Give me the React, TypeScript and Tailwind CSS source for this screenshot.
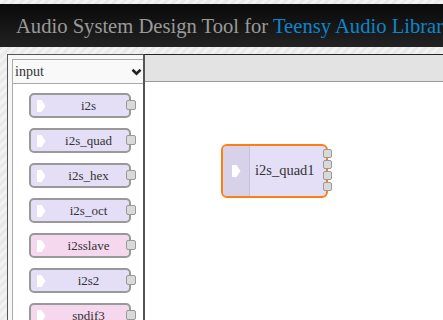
import React from "react";

const serif = "font-['Liberation_Serif','DejaVu_Serif',serif]";

type PaletteItem = { name: string; pink?: boolean };

const items: PaletteItem[] = [
  { name: "i2s" },
  { name: "i2s_quad" },
  { name: "i2s_hex" },
  { name: "i2s_oct" },
  { name: "i2sslave", pink: true },
  { name: "i2s2" },
  { name: "spdif3", pink: true },
];

function Arrow() {
  return (
    <svg width="9" height="14" viewBox="0 0 9 14">
      <polygon points="0,1 4.5,1 8.5,7 4.5,13 0,13" fill="#fff" />
    </svg>
  );
}

function Port({ size = "w-[10px] h-[10px]" }: { size?: string }) {
  return <div className={size + " rounded-[2px] border border-[#999] bg-[#d9d9d9]"} />;
}

function PaletteNode({ item }: { item: PaletteItem }) {
  return (
    <div className="relative w-[102px] h-[25px]">
      <div
        className={
          "w-full h-full rounded-[5px] border-2 border-[#999] flex items-center " +
          (item.pink ? "bg-[#f5d7ee]" : "bg-[#e4dff6]")
        }
      >
        <div className="w-[15px] flex justify-end">
          <Arrow />
        </div>
        <span className={"flex-1 text-center text-[13px] leading-none text-[#333] pl-[2px] " + serif}>
          {item.name}
        </span>
      </div>
      <div className="absolute right-[-5px] top-[7px]">
        <Port />
      </div>
    </div>
  );
}

export default function App() {
  return (
    <div className="w-[443px] h-[320px] overflow-hidden flex flex-col bg-[repeating-linear-gradient(135deg,#f2f2f2_0px,#f2f2f2_3px,#e9e9e9_3px,#e9e9e9_6px)]">
      {/* title bar */}
      <div className="mt-[4px] h-[43px] shrink-0 bg-gradient-to-b from-[#0a0a0a] to-[#222] flex items-center pl-[16px] pt-[2px] whitespace-nowrap">
        <span className={"text-[20.6px] text-[#9a9a9a] " + serif}>
          Audio System Design Tool for{" "}
          <span className="text-[#0b86cc]">Teensy Audio Library</span>
        </span>
      </div>

      <div className="flex flex-1 pt-[7px] pl-[7px]">
        {/* palette */}
        <div className="w-[136px] border-l border-t border-[#555] bg-[#f7f7f7] pl-[4px] pt-[4px]">
          <div className="h-full border-l border-t border-[#aaa] bg-white">
            <div className="h-[24px] flex items-center justify-between border-b border-[#aaa] bg-[#f9f9f9] pl-[2px] pr-[1px]">
              <span className={"text-[14px] text-[#333] " + serif}>input</span>
              <svg width="11" height="8" viewBox="0 0 11 8">
                <path d="M1.5 1.8 L5.5 5.6 L9.5 1.8" stroke="#222" strokeWidth="2.6" fill="none" />
              </svg>
            </div>
            <div className="flex flex-col gap-[10px] pt-[9px] pl-[16px]">
              {items.map((it) => (
                <PaletteNode key={it.name} item={it} />
              ))}
            </div>
          </div>
        </div>

        {/* workspace */}
        <div className="flex-1 flex flex-col border-l-2 border-t border-l-[#555] border-t-[#222]">
          <div className="h-[27px] bg-[#e3e3e3] border-b border-[#999]" />
          <div className="relative flex-1 bg-white">
            <div className="absolute left-[76px] top-[62px] w-[107px] h-[54px] rounded-[6px] border-2 border-[#ff7f0e] bg-[#e4dff6] flex">
              <div className="w-[27px] bg-[#d7d1ea] border-r border-[#c9c2de] rounded-l-[4px] flex items-center justify-center">
                <Arrow />
              </div>
              <span className={"flex-1 flex items-center pl-[5px] text-[14.5px] text-[#333] " + serif}>
                i2s_quad1
              </span>
              <div className="absolute right-[-6px] top-[3px] flex flex-col gap-[2px]">
                <Port size="w-[9px] h-[9px]" />
                <Port size="w-[9px] h-[9px]" />
                <Port size="w-[9px] h-[9px]" />
                <Port size="w-[9px] h-[9px]" />
              </div>
            </div>
          </div>
        </div>
      </div>
    </div>
  );
}
